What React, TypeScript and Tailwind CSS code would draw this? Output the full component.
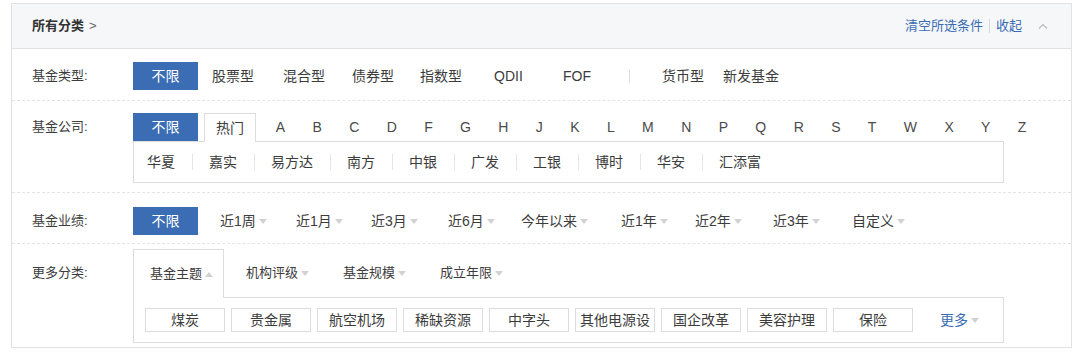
import React from "react";

const font = "font-['Liberation_Sans','Noto_Sans_CJK_SC',sans-serif]";

function Caret({ up }: { up?: boolean }) {
  if (up) {
    return <span className="ml-[3px] inline-block h-0 w-0 border-x-[4px] border-b-[5px] border-x-transparent border-b-[#d2d2d2]" />;
  }
  return <span className="ml-[3px] inline-block h-0 w-0 border-x-[4px] border-t-[5px] border-x-transparent border-t-[#d2d2d2]" />;
}

function AllButton() {
  return (
    <div className="flex h-[28px] w-[65px] shrink-0 items-center justify-center bg-[#3b6db5] text-[14px] text-white">
      不限
    </div>
  );
}

function Label({ children }: { children: React.ReactNode }) {
  return <div className="w-[121px] shrink-0 pl-[20px] text-[13px] text-[#3c3c3c]">{children}</div>;
}

const fundTypes = [
  { t: "股票型", w: "w-[71px]" },
  { t: "混合型", w: "w-[69px]" },
  { t: "债券型", w: "w-[68px]" },
  { t: "指数型", w: "w-[74px]" },
  { t: "QDII", w: "w-[69px]" },
  { t: "FOF", w: "w-[66px]" },
];

const letters = "ABCDFGHJKLMNPQRSTWXYZ".split("");

const hotCompanies = ["华夏", "嘉实", "易方达", "南方", "中银", "广发", "工银", "博时", "华安", "汇添富"];

const periods = [
  { t: "近1周", w: "w-[76px]" },
  { t: "近1月", w: "w-[75px]" },
  { t: "近3月", w: "w-[77px]" },
  { t: "近6月", w: "w-[73px]" },
  { t: "今年以来", w: "w-[100px]" },
  { t: "近1年", w: "w-[74px]" },
  { t: "近2年", w: "w-[78px]" },
  { t: "近3年", w: "w-[79px]" },
  { t: "自定义", w: "" },
];

const themes = ["煤炭", "贵金属", "航空机场", "稀缺资源", "中字头", "其他电源设", "国企改革", "美容护理", "保险"];

export default function App() {
  return (
    <div className={`min-h-[353px] bg-white pl-[11px] pt-[3px] text-[#3c3c3c] ${font}`}>
      <div className="w-[1061px] border border-[#e2e2e2]">
        {/* header */}
        <div className="flex h-[45px] items-center justify-between border-b border-[#e2e2e2] bg-[#f6f7f9] pl-[20px] pr-[23px]">
          <div className="text-[13px]">
            <span className="font-bold text-[#333]">所有分类</span>
            <span className="ml-[5px] text-[#666]">&gt;</span>
          </div>
          <div className="flex items-center text-[13px] text-[#3a6cb5]">
            <span>清空所选条件</span>
            <span className="mx-[6px] h-[14px] w-px bg-[#d9d9d9]" />
            <span>收起</span>
            <svg className="ml-[16px]" width="10" height="6" viewBox="0 0 10 6">
              <polyline points="1,5.5 5,1.5 9,5.5" fill="none" stroke="#bcbcbc" strokeWidth="1.2" />
            </svg>
          </div>
        </div>

        {/* 基金类型 */}
        <div className="flex items-center border-b border-dashed border-[#e4e4e4] pb-[10px] pt-[13px]">
          <Label>基金类型:</Label>
          <AllButton />
          <div className="ml-[14px] flex items-center text-[14px]">
            {fundTypes.map((f) => (
              <span key={f.t} className={f.w}>
                {f.t}
              </span>
            ))}
            <span className="h-[13px] w-px bg-[#dcdcdc]" />
            <span className="ml-[32px] w-[61px]">货币型</span>
            <span>新发基金</span>
          </div>
        </div>

        {/* 基金公司 */}
        <div className="flex items-start border-b border-dashed border-[#e4e4e4] pb-[9px] pt-[12px]">
          <div className="flex h-[28px] items-center">
            <Label>基金公司:</Label>
          </div>
          <div className="flex flex-col">
            <div className="flex h-[28px] items-start">
              <AllButton />
              <div className="relative z-10 ml-[6px] flex h-[29px] w-[52px] items-center justify-center border-x border-t border-[#dcdcdc] bg-white text-[14px]">
                热门
              </div>
              <div className="ml-[6px] flex h-[28px] items-center text-[14px] text-[#4a4a4a]">
                {letters.map((l) => (
                  <span key={l} className="px-[13.7px]">
                    {l}
                  </span>
                ))}
              </div>
            </div>
            <div className="flex h-[42px] w-[871px] items-center border border-[#dcdcdc] pl-[13px] text-[14px]">
              {hotCompanies.map((c, i) => (
                <React.Fragment key={c}>
                  {i > 0 && <span className="h-[16px] w-px bg-[#e6e6e6]" />}
                  <span className={i === 0 ? "pr-[16.5px]" : "px-[16.5px]"}>{c}</span>
                </React.Fragment>
              ))}
            </div>
          </div>
        </div>

        {/* 基金业绩 */}
        <div className="flex items-center border-b border-dashed border-[#e4e4e4] pb-[8px] pt-[14px]">
          <Label>基金业绩:</Label>
          <AllButton />
          <div className="ml-[22px] flex items-center text-[14px]">
            {periods.map((p) => (
              <span key={p.t} className={`flex items-center ${p.w}`}>
                {p.t}
                <Caret />
              </span>
            ))}
          </div>
        </div>

        {/* 更多分类 */}
        <div className="flex items-start pb-[4px] pt-[5px]">
          <div className="flex h-[48px] items-center">
            <Label>更多分类:</Label>
          </div>
          <div className="flex flex-col">
            <div className="flex h-[48px] items-start text-[13px]">
              <div className="relative z-10 flex h-[49px] items-center border-x border-t border-[#dcdcdc] bg-white pl-[16px] pr-[10px]">
                基金主题
                <Caret up />
              </div>
              {["机构评级", "基金规模", "成立年限"].map((t) => (
                <div key={t} className="flex h-[48px] items-center pl-[22px] pr-[12px]">
                  {t}
                  <Caret />
                </div>
              ))}
            </div>
            <div className="flex w-[871px] items-center border border-[#dcdcdc] pb-[10px] pl-[11px] pt-[10px] text-[14px]">
              {themes.map((t, i) => (
                <span
                  key={t}
                  className={`flex h-[24px] w-[80px] items-center justify-center border border-[#dcdcdc] ${i > 0 ? "ml-[6px]" : ""}`}
                >
                  {t}
                </span>
              ))}
              <span className="ml-[27px] flex items-center text-[#3a6cb5]">
                更多
                <Caret />
              </span>
            </div>
          </div>
        </div>
      </div>
    </div>
  );
}
